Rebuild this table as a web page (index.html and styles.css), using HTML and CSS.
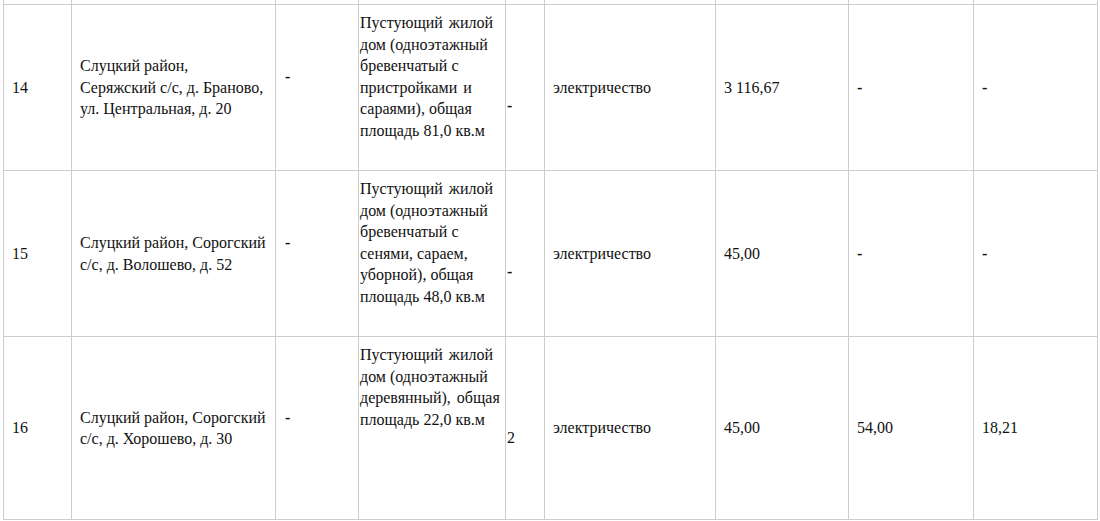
FILE: index.html
```html
<!DOCTYPE html>
<html lang="ru">
<head>
<meta charset="utf-8">
<title>Таблица</title>
<link rel="stylesheet" href="styles.css">
</head>
<body>
<div class="sheet">
  <div class="cell stub"></div><div class="cell stub"></div><div class="cell stub"></div><div class="cell stub"></div><div class="cell stub"></div><div class="cell stub"></div><div class="cell stub"></div><div class="cell stub"></div><div class="cell stub"></div>

  <div class="cell">14</div>
  <div class="cell">Слуцкий район,<br>Серяжский с/с, д. Браново,<br>ул. Центральная, д. 20</div>
  <div class="cell dash2"><span class="stack"><b class="dash">-</b><br>&nbsp;</span></div>
  <div class="cell desc">Пустующий <span class="wide">жилой</span><br>дом (одноэтажный<br>бревенчатый с<br>пристройками <span class="wide">и</span><br>сараями), общая<br>площадь 81,0 кв.м</div>
  <div class="cell narrow low"><b class="dash">-</b></div>
  <div class="cell">электричество</div>
  <div class="cell">3 116,67</div>
  <div class="cell"><b class="dash">-</b></div>
  <div class="cell"><b class="dash">-</b></div>

  <div class="cell">15</div>
  <div class="cell">Слуцкий район, Сорогский<br>с/с, д. Волошево, д. 52</div>
  <div class="cell dash2"><span class="stack"><b class="dash">-</b><br>&nbsp;</span></div>
  <div class="cell desc">Пустующий <span class="wide">жилой</span><br>дом (одноэтажный<br>бревенчатый с<br>сенями, сараем,<br>уборной), общая<br>площадь 48,0 кв.м</div>
  <div class="cell narrow low"><b class="dash">-</b></div>
  <div class="cell">электричество</div>
  <div class="cell">45,00</div>
  <div class="cell"><b class="dash">-</b></div>
  <div class="cell"><b class="dash">-</b></div>

  <div class="cell">16</div>
  <div class="cell">Слуцкий район, Сорогский<br>с/с, д. Хорошево, д. 30</div>
  <div class="cell dash2"><span class="stack"><b class="dash">-</b><br>&nbsp;</span></div>
  <div class="cell desc">Пустующий <span class="wide">жилой</span><br>дом (одноэтажный<br>деревянный), <span class="wide">общая</span><br>площадь 22,0 кв.м</div>
  <div class="cell narrow mid">2</div>
  <div class="cell">электричество</div>
  <div class="cell">45,00</div>
  <div class="cell">54,00</div>
  <div class="cell">18,21</div>
</div>
</body>
</html>
```

FILE: styles.css
```css
html, body {
  margin: 0;
  padding: 0;
  background: #ffffff;
}

body {
  font-family: "Liberation Serif", "Tinos", "DejaVu Serif", serif;
  font-size: 16px;
  line-height: 21.5px;
  color: #111111;
}

.sheet {
  display: grid;
  grid-template-columns: 67px 203px 82px 146px 38px 170px 132px 124px 123px;
  grid-template-rows: 4px 165px 165px 182px;
  gap: 1px;
  padding: 0 1px 1px 1px;
  margin-left: 3px;
  width: max-content;
  background: #cdcdcd;
}

.cell {
  background: #ffffff;
  display: flex;
  align-items: center;
  padding: 0 8px;
  white-space: nowrap;
}

.stub {
  padding: 0;
}

.dash {
  font-weight: 700;
}

.dash2 {
  padding-left: 9px;
}

.stack {
  display: block;
}

.desc {
  display: block;
  padding: 7px 2px 0 1px;
}

.wide {
  margin-left: 2px;
}

.narrow {
  padding-left: 1px;
  padding-right: 0;
}

.low {
  padding-top: 37px;
}

.mid {
  padding-top: 20px;
}
```
